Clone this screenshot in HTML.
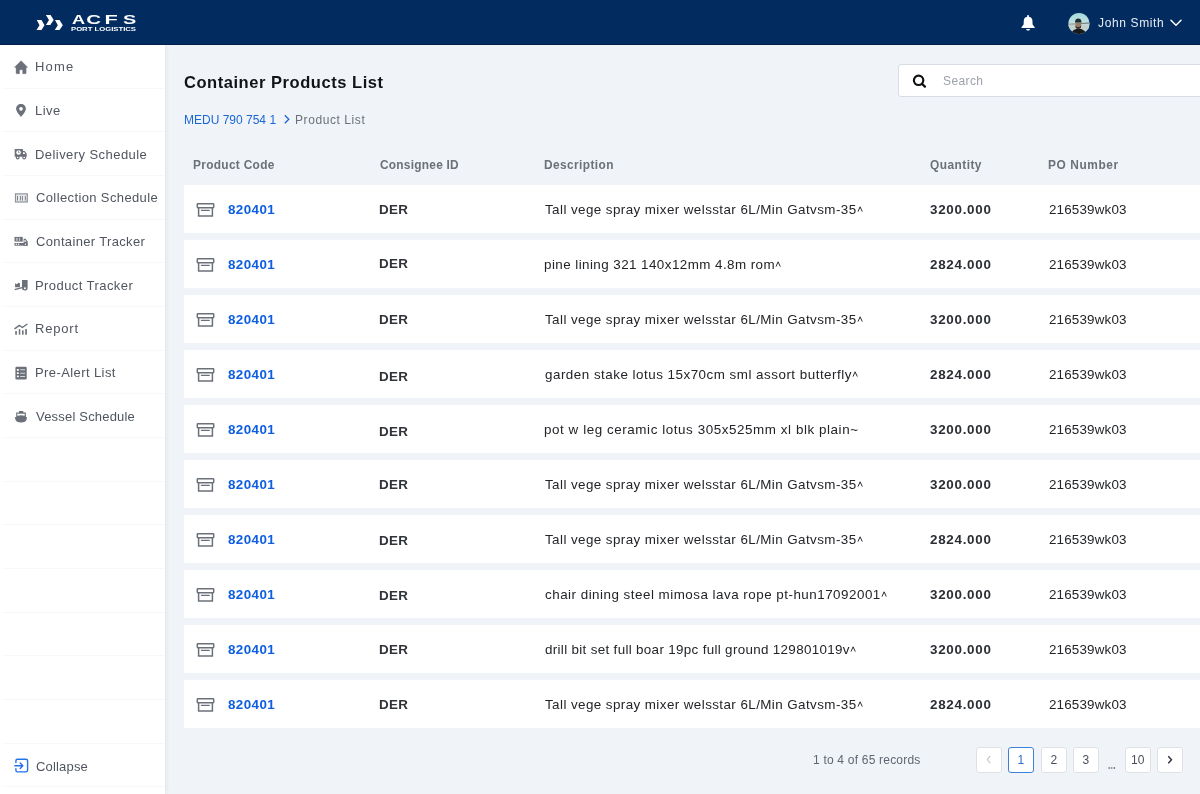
<!DOCTYPE html>
<html><head><meta charset="utf-8">
<style>
*{margin:0;padding:0;box-sizing:border-box}
html,body{width:1200px;height:794px;overflow:hidden;background:#f0f4f8;font-family:"Liberation Sans",sans-serif}
.a{position:absolute}
.t{position:absolute;white-space:nowrap;line-height:1;z-index:3;will-change:transform}
#hdr{left:0;top:0;width:1200px;height:45px;background:#022b60;box-shadow:inset 0 -1px 0 rgba(0,10,40,.35);z-index:2}
#side{left:0;top:45px;width:165px;height:749px;background:#fff;box-shadow:1px 0 5px rgba(0,0,0,.07)}
.sep{position:absolute;left:2px;width:163px;height:1px;background:#f7f8f9}
.nav{color:#50565f}
.ni{position:absolute;left:14px}
.hd{font-weight:bold;color:#6b7079}
.row{position:absolute;left:184px;width:1016px;height:48px;background:#fff}
.code{font-weight:bold;color:#0d5ee2}
.der{font-weight:bold;color:#303338}
.desc{color:#222428}
.qty{font-weight:bold;color:#2b2e33}
.po{color:#222428}
.pb{position:absolute;top:746.5px;width:25.5px;height:25.5px;border:1px solid #dde1e6;border-radius:3px;background:#fff;font-size:12px;color:#4a4f57;text-align:center;line-height:25.5px;will-change:transform}
svg.a,svg.ni{z-index:3}
</style></head><body>
<div id="hdr" class="a"></div>
<svg class="a" style="left:34px;top:12px" width="32" height="22" viewBox="0 0 32 22">
<path d="M2.8 8 L7.5 8 L10.5 13.3 L7.5 18 L2.5 18 L5.5 13.3 Z" fill="#fff"/>
<path d="M11.9 3 L16.6 3 L19.7 8 L16.3 13 L11.9 13 L15 8 Z" fill="#fff"/>
<path d="M21 8 L25.5 8 L28.8 13.3 L25.5 18 L20.8 18 L23.8 13.3 Z" fill="#fff"/>
</svg>
<svg class="a" style="left:70px;top:13px;will-change:transform" width="70" height="20" viewBox="0 0 70 20"><g font-family="Liberation Sans" font-weight="bold" font-size="12.8" fill="#fff"><text transform="translate(2,11) scale(1.42,1)">A</text><text transform="translate(16.2,11) scale(1.6,1)">C</text><text transform="translate(34.6,11) scale(1.7,1)">F</text><text transform="translate(53,11) scale(1.55,1)">S</text></g><text x="1" y="18" font-family="Liberation Sans" font-weight="bold" font-size="5.4" fill="#fff" textLength="65" lengthAdjust="spacingAndGlyphs">PORT LOGISTICS</text></svg>
<svg class="a" style="left:1016px;top:10px" width="24" height="24" viewBox="0 0 24 24">
<rect x="11.2" y="5" width="1.8" height="2.6" rx="0.8" fill="#fff"/>
<path d="M12.1 6.7 C14.9 6.7 16.3 8.3 16.4 10.6 L16.6 14.4 L18.7 17.2 L18.7 17.9 L5.5 17.9 L5.5 17.2 L7.6 14.4 L7.8 10.6 C7.9 8.3 9.3 6.7 12.1 6.7 Z" fill="#fff"/>
<path d="M10.2 18.9 L14 18.9 C13.9 20 13.1 20.6 12.1 20.6 C11.1 20.6 10.3 20 10.2 18.9 Z" fill="#fff"/>
</svg>
<svg class="a" style="left:1068px;top:12.5px" width="22" height="22" viewBox="0 0 22 22">
<defs><clipPath id="cc"><circle cx="11" cy="10.6" r="10.6"/></clipPath>
<linearGradient id="sky" x1="0" y1="0" x2="0" y2="1"><stop offset="0" stop-color="#a4dadd"/><stop offset="0.45" stop-color="#c4dede"/><stop offset="1" stop-color="#c9d3cf"/></linearGradient></defs>
<g clip-path="url(#cc)">
<rect width="22" height="22" fill="url(#sky)"/>
<path d="M0 10.8 L8 10.6 L22 9.2 L22 10.6 L8 11.6 L0 11.8 Z" fill="#6d7f80"/>
<rect x="0" y="11.6" width="22" height="5" fill="#c3d0cd"/>
<path d="M7.3 9.5 C7.3 13.8 8.5 15.6 10.3 15.6 C12.1 15.6 13.3 13.8 13.3 9.5 Z" fill="#9a7b68"/>
<path d="M7.4 12.2 C8 14.6 12.6 14.6 13.2 12.2 L13.1 14.2 C12.3 16.2 8.3 16.2 7.5 14.2 Z" fill="#3e3029"/>
<path d="M7.1 8.6 C7.2 6.6 8.5 5.5 10.3 5.5 C12.1 5.5 13.3 6.6 13.4 8.6 L13.6 9.6 L7 9.6 Z" fill="#17302f"/>
<path d="M2.5 22 C3.5 18 6.5 15.8 10.3 15.8 C14.1 15.8 17.5 17.5 19 22 Z" fill="#151b1b"/>
</g></svg>
<div class="t " id="t0" style="left:1098.00px;top:17.21px;font-size:12px;letter-spacing:0.633px;color:#e8ecf3">John Smith</div>
<svg class="a" style="left:1170px;top:18.5px" width="12" height="8" viewBox="0 0 12 8">
<path d="M1 1.2 L6 6.2 L11 1.2" stroke="#fff" stroke-width="1.5" fill="none" stroke-linecap="round" stroke-linejoin="round"/></svg>
<div id="side" class="a"></div>
<div class="sep" style="top:87.7px"></div>
<div class="sep" style="top:131.3px"></div>
<div class="sep" style="top:175.0px"></div>
<div class="sep" style="top:218.6px"></div>
<div class="sep" style="top:262.3px"></div>
<div class="sep" style="top:306.0px"></div>
<div class="sep" style="top:349.6px"></div>
<div class="sep" style="top:393.3px"></div>
<div class="sep" style="top:436.9px"></div>
<div class="sep" style="top:480.6px"></div>
<div class="sep" style="top:524.3px"></div>
<div class="sep" style="top:567.9px"></div>
<div class="sep" style="top:611.6px"></div>
<div class="sep" style="top:655.2px"></div>
<div class="sep" style="top:698.9px"></div>
<div class="sep" style="top:742.6px"></div>
<div class="sep" style="top:786.2px"></div>
<div class="t nav" id="t1" style="left:35.39px;top:60.30px;font-size:13px;letter-spacing:1.167px;">Home</div>
<div class="t nav" id="t2" style="left:35.39px;top:103.96px;font-size:13px;letter-spacing:0.433px;">Live</div>
<div class="t nav" id="t3" style="left:35.39px;top:147.63px;font-size:13px;letter-spacing:0.438px;">Delivery Schedule</div>
<div class="t nav" id="t4" style="left:36.39px;top:191.29px;font-size:13px;letter-spacing:0.378px;">Collection Schedule</div>
<div class="t nav" id="t5" style="left:36.39px;top:234.94px;font-size:13px;letter-spacing:0.344px;">Container Tracker</div>
<div class="t nav" id="t6" style="left:35.39px;top:278.60px;font-size:13px;letter-spacing:0.429px;">Product Tracker</div>
<div class="t nav" id="t7" style="left:35.39px;top:322.27px;font-size:13px;letter-spacing:0.800px;">Report</div>
<div class="t nav" id="t8" style="left:35.39px;top:365.93px;font-size:13px;letter-spacing:0.408px;">Pre-Alert List</div>
<div class="t nav" id="t9" style="left:36.39px;top:409.58px;font-size:13px;letter-spacing:0.193px;">Vessel Schedule</div>
<div class="t nav" id="t10" style="left:35.60px;top:759.50px;font-size:13px;letter-spacing:0.171px;">Collapse</div>
<svg class="ni" style="left:12px;top:58px" width="18" height="18" viewBox="0 0 18 18"><path d="M9.1 2.7 L15.6 9.3 L14.1 9.6 L14.1 15.1 Q14.1 15.7 13.5 15.7 L10.7 15.7 L10.7 11.8 L7.5 11.8 L7.5 15.7 L4.7 15.7 Q4.1 15.7 4.1 15.1 L4.1 9.6 L2.5 9.3 Z" fill="#6b7079" stroke="#6b7079" stroke-width="0.4" stroke-linejoin="round"/></svg>
<svg class="ni" style="left:12px;top:101px" width="18" height="18" viewBox="0 0 18 18"><path d="M9 2.9 C11.8 2.9 13.9 5 13.9 7.8 C13.9 10.8 9 15.9 9 15.9 C9 15.9 4.1 10.8 4.1 7.8 C4.1 5 6.2 2.9 9 2.9 Z M9 6 A1.85 1.85 0 1 0 9 9.7 A1.85 1.85 0 1 0 9 6 Z" fill="#6b7079" fill-rule="evenodd"/></svg>
<svg class="ni" style="left:12px;top:145px" width="18" height="18" viewBox="0 0 18 18"><path d="M2.7 4 L10.9 4 L10.9 6.1 L12.6 6.1 L14.7 8.4 L14.7 11.8 L2.7 11.8 Z" fill="#6b7079"/><circle cx="5.7" cy="12.5" r="1.9" fill="#6b7079"/><circle cx="12.2" cy="12.5" r="1.9" fill="#6b7079"/><circle cx="5.7" cy="12.5" r="0.8" fill="#fff"/><circle cx="12.2" cy="12.5" r="0.8" fill="#fff"/><circle cx="6.6" cy="7.5" r="2.3" fill="#fff"/><path d="M6.5 5.9 L6.5 7.5 L7.7 7.7" stroke="#6b7079" stroke-width="0.7" fill="none"/><path d="M11 7.2 L12.3 7.2 L13.4 9.1 L11 9.1 Z" fill="#fff"/></svg>
<svg class="ni" style="left:12px;top:189px" width="18" height="18" viewBox="0 0 18 18"><rect x="3.5" y="4.9" width="11.8" height="8.1" fill="#eceef0" stroke="#8d9198" stroke-width="1.2"/><path d="M5.5 6.9 V11.6 M8.4 6.9 V11.6 M10.4 6.9 V11.6 M13.3 6.9 V11.6" stroke="#7a7f87" stroke-width="1"/></svg>
<svg class="ni" style="left:12px;top:233px" width="18" height="18" viewBox="0 0 18 18"><rect x="2.5" y="3.9" width="8.2" height="4.7" fill="#6b7079"/><rect x="3.9" y="4.8" width="1.9" height="3" fill="#b4b8be"/><rect x="6.9" y="4.8" width="1.2" height="3" fill="#c4c7cc"/><path d="M11.6 5.7 L13.5 5.7 L15.6 8.4 L15.6 12.7 L11.6 12.7 Z" fill="#6b7079"/><rect x="2.5" y="10" width="13.1" height="2.7" fill="#6b7079"/><rect x="12.2" y="7.4" width="1.8" height="1.3" fill="#fff"/><circle cx="4.3" cy="11.3" r="0.7" fill="#fff"/><circle cx="6.6" cy="11.3" r="0.7" fill="#fff"/><circle cx="13.4" cy="11.3" r="0.7" fill="#fff"/></svg>
<svg class="ni" style="left:12px;top:276px" width="18" height="18" viewBox="0 0 18 18"><path d="M10 4 L15.6 4 L15.6 12 Q15.6 14.5 13 14.5 Q10 14.5 10 12 Z" fill="#6b7079"/><circle cx="12.9" cy="12.2" r="1" fill="#fff"/><path d="M3.1 7.2 L4.8 8.3 L6.4 6.8 L7.9 7.3 L7.9 11.3 L3.1 11.3 Z" fill="#6b7079"/><path d="M2.7 13.6 L10 11.6" stroke="#6b7079" stroke-width="1.3"/></svg>
<svg class="ni" style="left:12px;top:320px" width="18" height="18" viewBox="0 0 18 18"><path d="M2.9 8.6 L7.3 5.4 L10.4 7.5 L15 4.2" stroke="#6b7079" stroke-width="1.35" fill="none" stroke-linecap="round" stroke-linejoin="round"/><rect x="3.2" y="11.1" width="1.7" height="3.6" fill="#6b7079"/><rect x="6.8" y="9.1" width="1.5" height="5.6" fill="#6b7079"/><rect x="10" y="10.4" width="1.6" height="4.3" fill="#6b7079"/><rect x="13.2" y="9.1" width="1.7" height="5.6" fill="#6b7079"/></svg>
<svg class="ni" style="left:12px;top:364px" width="18" height="18" viewBox="0 0 18 18"><rect x="3.4" y="2.7" width="11.3" height="12.9" rx="1.3" fill="#6b7079"/><rect x="4.9" y="5" width="1.9" height="1.8" fill="#fff"/><rect x="4.9" y="8.3" width="1.9" height="1.7" fill="#fff"/><rect x="4.9" y="11.6" width="1.9" height="1.6" fill="#fff"/><path d="M8.2 5.8 H13 M8.2 9.2 H13 M8.2 12.5 H13" stroke="#d4d7db" stroke-width="1.1"/></svg>
<svg class="ni" style="left:12px;top:407px" width="18" height="18" viewBox="0 0 18 18"><rect x="7" y="4" width="4.3" height="2" fill="#6b7079"/><path d="M4.2 5.4 H13.9 V10.2 H4.2 Z M5.2 6.8 V8.8 Q9 7.6 12.7 8.8 V6.8 Z" fill="#6b7079" fill-rule="evenodd"/><path d="M2.9 10 H15 L14.6 12.5 Q13.8 15.4 9 15.4 Q4.2 15.4 3.4 12.5 Z" fill="#6b7079"/></svg>
<svg class="ni" style="left:12px;top:756px" width="18" height="18" viewBox="0 0 18 18"><path d="M3.9 6.6 V4.8 Q3.9 3.2 5.5 3.2 H13.9 Q15.6 3.2 15.6 4.8 V14.3 Q15.6 15.9 13.9 15.9 H5.5 Q3.9 15.9 3.9 14.3 V12.7" stroke="#2272e8" stroke-width="1.4" fill="none" stroke-linecap="round"/><path d="M2.8 9.75 H10.4 M8.2 7.1 L10.8 9.75 L8.2 12.4" stroke="#2272e8" stroke-width="1.4" fill="none" stroke-linecap="round" stroke-linejoin="round"/></svg>
<div class="t " id="t11" style="left:184.00px;top:74.02px;font-size:16.5px;letter-spacing:0.545px;font-weight:bold;color:#111317">Container Products List</div>
<div class="t " id="t12" style="left:184.00px;top:114.41px;font-size:12px;letter-spacing:0.000px;color:#1a66d6">MEDU 790 754 1</div>
<svg class="a" style="left:283px;top:114px" width="8" height="11" viewBox="0 0 8 11"><path d="M1.8 1.2 L5.8 5.2 L1.8 9.2" stroke="#1a66d6" stroke-width="1.3" fill="none"/></svg>
<div class="t " id="t13" style="left:295.19px;top:114.41px;font-size:12px;letter-spacing:0.582px;color:#6b7079">Product List</div>
<div class="a" style="left:898px;top:64px;width:320px;height:33px;background:#fff;border:1px solid #d8dde3;border-radius:3px"></div>
<svg class="a" style="left:912px;top:73.5px" width="16" height="16" viewBox="0 0 16 16"><circle cx="6.6" cy="6.3" r="4.7" stroke="#111" stroke-width="2.2" fill="none"/><path d="M10 9.7 L12.9 12.6" stroke="#111" stroke-width="2.3" stroke-linecap="round"/></svg>
<div class="t " id="t14" style="left:943.00px;top:75.01px;font-size:12px;letter-spacing:0.400px;color:#9ca1a9">Search</div>
<div class="t hd" id="t15" style="left:193.19px;top:160.40px;font-size:11.9px;letter-spacing:0.309px;">Product Code</div>
<div class="t hd" id="t16" style="left:380.00px;top:160.40px;font-size:11.9px;letter-spacing:0.245px;">Consignee ID</div>
<div class="t hd" id="t17" style="left:544.19px;top:160.40px;font-size:11.9px;letter-spacing:0.400px;">Description</div>
<div class="t hd" id="t18" style="left:930.00px;top:160.40px;font-size:11.9px;letter-spacing:0.464px;">Quantity</div>
<div class="t hd" id="t19" style="left:1047.50px;top:160.40px;font-size:11.9px;letter-spacing:0.594px;">PO Number</div>
<div class="row" style="top:185px"></div>
<svg class="a" style="left:196px;top:202.5px" width="19" height="15" viewBox="0 0 19 15"><rect x="1.3" y="0.8" width="16.4" height="3.9" rx="0.6" fill="none" stroke="#6b7079" stroke-width="1.5"/><path d="M2.6 4.7 V13 H16.4 V4.7" fill="none" stroke="#6b7079" stroke-width="1.5"/><path d="M5.5 7.4 H13.2" stroke="#6b7079" stroke-width="1.4" stroke-linecap="round"/></svg>
<div class="t code" id="t20" style="left:227.79px;top:203.41px;font-size:13.4px;letter-spacing:0.400px;">820401</div>
<div class="t der" id="t21" style="left:379.39px;top:203.41px;font-size:13.4px;letter-spacing:0.300px;">DER</div>
<div class="t desc" id="t22" style="left:545.19px;top:203.41px;font-size:13.4px;letter-spacing:0.422px;">Tall vege spray mixer welsstar 6L/Min Gatvsm-35<svg width="6.5" height="6" viewBox="0 0 6.5 6" style="vertical-align:2px;margin-left:0.3px"><path d="M1 5.6 L3.1 0.8 L5.3 5.6" stroke="currentColor" stroke-width="0.95" fill="none"/></svg></div>
<div class="t qty" id="t23" style="left:930.00px;top:203.41px;font-size:13.4px;letter-spacing:0.714px;">3200.000</div>
<div class="t po" id="t24" style="left:1049.00px;top:203.41px;font-size:13.4px;letter-spacing:0.167px;">216539wk03</div>
<div class="row" style="top:240px"></div>
<svg class="a" style="left:196px;top:257.5px" width="19" height="15" viewBox="0 0 19 15"><rect x="1.3" y="0.8" width="16.4" height="3.9" rx="0.6" fill="none" stroke="#6b7079" stroke-width="1.5"/><path d="M2.6 4.7 V13 H16.4 V4.7" fill="none" stroke="#6b7079" stroke-width="1.5"/><path d="M5.5 7.4 H13.2" stroke="#6b7079" stroke-width="1.4" stroke-linecap="round"/></svg>
<div class="t code" id="t25" style="left:227.79px;top:258.41px;font-size:13.4px;letter-spacing:0.400px;">820401</div>
<div class="t der" id="t26" style="left:379.39px;top:256.91px;font-size:13.4px;letter-spacing:0.300px;">DER</div>
<div class="t desc" id="t27" style="left:544.19px;top:258.41px;font-size:13.4px;letter-spacing:0.438px;">pine lining 321 140x12mm 4.8m rom<svg width="6.5" height="6" viewBox="0 0 6.5 6" style="vertical-align:2px;margin-left:0.3px"><path d="M1 5.6 L3.1 0.8 L5.3 5.6" stroke="currentColor" stroke-width="0.95" fill="none"/></svg></div>
<div class="t qty" id="t28" style="left:930.00px;top:258.41px;font-size:13.4px;letter-spacing:0.714px;">2824.000</div>
<div class="t po" id="t29" style="left:1049.00px;top:258.41px;font-size:13.4px;letter-spacing:0.167px;">216539wk03</div>
<div class="row" style="top:295px"></div>
<svg class="a" style="left:196px;top:312.5px" width="19" height="15" viewBox="0 0 19 15"><rect x="1.3" y="0.8" width="16.4" height="3.9" rx="0.6" fill="none" stroke="#6b7079" stroke-width="1.5"/><path d="M2.6 4.7 V13 H16.4 V4.7" fill="none" stroke="#6b7079" stroke-width="1.5"/><path d="M5.5 7.4 H13.2" stroke="#6b7079" stroke-width="1.4" stroke-linecap="round"/></svg>
<div class="t code" id="t30" style="left:227.79px;top:313.41px;font-size:13.4px;letter-spacing:0.400px;">820401</div>
<div class="t der" id="t31" style="left:379.39px;top:313.41px;font-size:13.4px;letter-spacing:0.300px;">DER</div>
<div class="t desc" id="t32" style="left:545.19px;top:313.41px;font-size:13.4px;letter-spacing:0.422px;">Tall vege spray mixer welsstar 6L/Min Gatvsm-35<svg width="6.5" height="6" viewBox="0 0 6.5 6" style="vertical-align:2px;margin-left:0.3px"><path d="M1 5.6 L3.1 0.8 L5.3 5.6" stroke="currentColor" stroke-width="0.95" fill="none"/></svg></div>
<div class="t qty" id="t33" style="left:930.00px;top:313.41px;font-size:13.4px;letter-spacing:0.714px;">3200.000</div>
<div class="t po" id="t34" style="left:1049.00px;top:313.41px;font-size:13.4px;letter-spacing:0.167px;">216539wk03</div>
<div class="row" style="top:350px"></div>
<svg class="a" style="left:196px;top:367.5px" width="19" height="15" viewBox="0 0 19 15"><rect x="1.3" y="0.8" width="16.4" height="3.9" rx="0.6" fill="none" stroke="#6b7079" stroke-width="1.5"/><path d="M2.6 4.7 V13 H16.4 V4.7" fill="none" stroke="#6b7079" stroke-width="1.5"/><path d="M5.5 7.4 H13.2" stroke="#6b7079" stroke-width="1.4" stroke-linecap="round"/></svg>
<div class="t code" id="t35" style="left:227.79px;top:368.41px;font-size:13.4px;letter-spacing:0.400px;">820401</div>
<div class="t der" id="t36" style="left:379.39px;top:370.30px;font-size:13.4px;letter-spacing:0.300px;">DER</div>
<div class="t desc" id="t37" style="left:545.19px;top:368.41px;font-size:13.4px;letter-spacing:0.496px;">garden stake lotus 15x70cm sml assort butterfly<svg width="6.5" height="6" viewBox="0 0 6.5 6" style="vertical-align:2px;margin-left:0.3px"><path d="M1 5.6 L3.1 0.8 L5.3 5.6" stroke="currentColor" stroke-width="0.95" fill="none"/></svg></div>
<div class="t qty" id="t38" style="left:930.00px;top:368.41px;font-size:13.4px;letter-spacing:0.714px;">2824.000</div>
<div class="t po" id="t39" style="left:1049.00px;top:368.41px;font-size:13.4px;letter-spacing:0.167px;">216539wk03</div>
<div class="row" style="top:405px"></div>
<svg class="a" style="left:196px;top:422.5px" width="19" height="15" viewBox="0 0 19 15"><rect x="1.3" y="0.8" width="16.4" height="3.9" rx="0.6" fill="none" stroke="#6b7079" stroke-width="1.5"/><path d="M2.6 4.7 V13 H16.4 V4.7" fill="none" stroke="#6b7079" stroke-width="1.5"/><path d="M5.5 7.4 H13.2" stroke="#6b7079" stroke-width="1.4" stroke-linecap="round"/></svg>
<div class="t code" id="t40" style="left:227.79px;top:423.41px;font-size:13.4px;letter-spacing:0.400px;">820401</div>
<div class="t der" id="t41" style="left:379.39px;top:424.50px;font-size:13.4px;letter-spacing:0.300px;">DER</div>
<div class="t desc" id="t42" style="left:544.19px;top:423.41px;font-size:13.4px;letter-spacing:0.572px;">pot w leg ceramic lotus 305x525mm xl blk plain~</div>
<div class="t qty" id="t43" style="left:930.00px;top:423.41px;font-size:13.4px;letter-spacing:0.714px;">3200.000</div>
<div class="t po" id="t44" style="left:1049.00px;top:423.41px;font-size:13.4px;letter-spacing:0.167px;">216539wk03</div>
<div class="row" style="top:460px"></div>
<svg class="a" style="left:196px;top:477.5px" width="19" height="15" viewBox="0 0 19 15"><rect x="1.3" y="0.8" width="16.4" height="3.9" rx="0.6" fill="none" stroke="#6b7079" stroke-width="1.5"/><path d="M2.6 4.7 V13 H16.4 V4.7" fill="none" stroke="#6b7079" stroke-width="1.5"/><path d="M5.5 7.4 H13.2" stroke="#6b7079" stroke-width="1.4" stroke-linecap="round"/></svg>
<div class="t code" id="t45" style="left:227.79px;top:478.41px;font-size:13.4px;letter-spacing:0.400px;">820401</div>
<div class="t der" id="t46" style="left:379.39px;top:478.41px;font-size:13.4px;letter-spacing:0.300px;">DER</div>
<div class="t desc" id="t47" style="left:545.19px;top:478.41px;font-size:13.4px;letter-spacing:0.422px;">Tall vege spray mixer welsstar 6L/Min Gatvsm-35<svg width="6.5" height="6" viewBox="0 0 6.5 6" style="vertical-align:2px;margin-left:0.3px"><path d="M1 5.6 L3.1 0.8 L5.3 5.6" stroke="currentColor" stroke-width="0.95" fill="none"/></svg></div>
<div class="t qty" id="t48" style="left:930.00px;top:478.41px;font-size:13.4px;letter-spacing:0.714px;">3200.000</div>
<div class="t po" id="t49" style="left:1049.00px;top:478.41px;font-size:13.4px;letter-spacing:0.167px;">216539wk03</div>
<div class="row" style="top:515px"></div>
<svg class="a" style="left:196px;top:532.5px" width="19" height="15" viewBox="0 0 19 15"><rect x="1.3" y="0.8" width="16.4" height="3.9" rx="0.6" fill="none" stroke="#6b7079" stroke-width="1.5"/><path d="M2.6 4.7 V13 H16.4 V4.7" fill="none" stroke="#6b7079" stroke-width="1.5"/><path d="M5.5 7.4 H13.2" stroke="#6b7079" stroke-width="1.4" stroke-linecap="round"/></svg>
<div class="t code" id="t50" style="left:227.79px;top:533.41px;font-size:13.4px;letter-spacing:0.400px;">820401</div>
<div class="t der" id="t51" style="left:379.39px;top:533.91px;font-size:13.4px;letter-spacing:0.300px;">DER</div>
<div class="t desc" id="t52" style="left:545.19px;top:533.41px;font-size:13.4px;letter-spacing:0.422px;">Tall vege spray mixer welsstar 6L/Min Gatvsm-35<svg width="6.5" height="6" viewBox="0 0 6.5 6" style="vertical-align:2px;margin-left:0.3px"><path d="M1 5.6 L3.1 0.8 L5.3 5.6" stroke="currentColor" stroke-width="0.95" fill="none"/></svg></div>
<div class="t qty" id="t53" style="left:930.00px;top:533.41px;font-size:13.4px;letter-spacing:0.714px;">2824.000</div>
<div class="t po" id="t54" style="left:1049.00px;top:533.41px;font-size:13.4px;letter-spacing:0.167px;">216539wk03</div>
<div class="row" style="top:570px"></div>
<svg class="a" style="left:196px;top:587.5px" width="19" height="15" viewBox="0 0 19 15"><rect x="1.3" y="0.8" width="16.4" height="3.9" rx="0.6" fill="none" stroke="#6b7079" stroke-width="1.5"/><path d="M2.6 4.7 V13 H16.4 V4.7" fill="none" stroke="#6b7079" stroke-width="1.5"/><path d="M5.5 7.4 H13.2" stroke="#6b7079" stroke-width="1.4" stroke-linecap="round"/></svg>
<div class="t code" id="t55" style="left:227.79px;top:588.41px;font-size:13.4px;letter-spacing:0.400px;">820401</div>
<div class="t der" id="t56" style="left:379.39px;top:589.30px;font-size:13.4px;letter-spacing:0.300px;">DER</div>
<div class="t desc" id="t57" style="left:545.19px;top:588.41px;font-size:13.4px;letter-spacing:0.492px;">chair dining steel mimosa lava rope pt-hun17092001<svg width="6.5" height="6" viewBox="0 0 6.5 6" style="vertical-align:2px;margin-left:0.3px"><path d="M1 5.6 L3.1 0.8 L5.3 5.6" stroke="currentColor" stroke-width="0.95" fill="none"/></svg></div>
<div class="t qty" id="t58" style="left:930.00px;top:588.41px;font-size:13.4px;letter-spacing:0.714px;">3200.000</div>
<div class="t po" id="t59" style="left:1049.00px;top:588.41px;font-size:13.4px;letter-spacing:0.167px;">216539wk03</div>
<div class="row" style="top:625px"></div>
<svg class="a" style="left:196px;top:642.5px" width="19" height="15" viewBox="0 0 19 15"><rect x="1.3" y="0.8" width="16.4" height="3.9" rx="0.6" fill="none" stroke="#6b7079" stroke-width="1.5"/><path d="M2.6 4.7 V13 H16.4 V4.7" fill="none" stroke="#6b7079" stroke-width="1.5"/><path d="M5.5 7.4 H13.2" stroke="#6b7079" stroke-width="1.4" stroke-linecap="round"/></svg>
<div class="t code" id="t60" style="left:227.79px;top:643.41px;font-size:13.4px;letter-spacing:0.400px;">820401</div>
<div class="t der" id="t61" style="left:379.39px;top:643.41px;font-size:13.4px;letter-spacing:0.300px;">DER</div>
<div class="t desc" id="t62" style="left:545.19px;top:643.41px;font-size:13.4px;letter-spacing:0.328px;">drill bit set full boar 19pc full ground 129801019v<svg width="6.5" height="6" viewBox="0 0 6.5 6" style="vertical-align:2px;margin-left:0.3px"><path d="M1 5.6 L3.1 0.8 L5.3 5.6" stroke="currentColor" stroke-width="0.95" fill="none"/></svg></div>
<div class="t qty" id="t63" style="left:930.00px;top:643.41px;font-size:13.4px;letter-spacing:0.714px;">3200.000</div>
<div class="t po" id="t64" style="left:1049.00px;top:643.41px;font-size:13.4px;letter-spacing:0.167px;">216539wk03</div>
<div class="row" style="top:680px"></div>
<svg class="a" style="left:196px;top:697.5px" width="19" height="15" viewBox="0 0 19 15"><rect x="1.3" y="0.8" width="16.4" height="3.9" rx="0.6" fill="none" stroke="#6b7079" stroke-width="1.5"/><path d="M2.6 4.7 V13 H16.4 V4.7" fill="none" stroke="#6b7079" stroke-width="1.5"/><path d="M5.5 7.4 H13.2" stroke="#6b7079" stroke-width="1.4" stroke-linecap="round"/></svg>
<div class="t code" id="t65" style="left:227.79px;top:698.41px;font-size:13.4px;letter-spacing:0.400px;">820401</div>
<div class="t der" id="t66" style="left:379.39px;top:698.30px;font-size:13.4px;letter-spacing:0.300px;">DER</div>
<div class="t desc" id="t67" style="left:545.19px;top:698.41px;font-size:13.4px;letter-spacing:0.422px;">Tall vege spray mixer welsstar 6L/Min Gatvsm-35<svg width="6.5" height="6" viewBox="0 0 6.5 6" style="vertical-align:2px;margin-left:0.3px"><path d="M1 5.6 L3.1 0.8 L5.3 5.6" stroke="currentColor" stroke-width="0.95" fill="none"/></svg></div>
<div class="t qty" id="t68" style="left:930.00px;top:698.41px;font-size:13.4px;letter-spacing:0.714px;">2824.000</div>
<div class="t po" id="t69" style="left:1049.00px;top:698.41px;font-size:13.4px;letter-spacing:0.167px;">216539wk03</div>
<div class="t " id="t70" style="left:813.00px;top:754.32px;font-size:12px;letter-spacing:0.205px;color:#5f6670">1 to 4 of 65 records</div>
<div class="pb" style="left:975.5px;"><svg width="8" height="11" viewBox="0 0 8 11" style="vertical-align:-1px"><path d="M5.3 1.8 L2.3 5.6 L5.3 9.4" stroke="#c3c7cd" stroke-width="1.1" fill="none"/></svg></div>
<div class="pb" style="left:1008px;border-color:#3d7fd9;color:#2f6fd0;">1</div>
<div class="pb" style="left:1040.5px;">2</div>
<div class="pb" style="left:1072.5px;">3</div>
<div class="pb" style="left:1124.5px;">10</div>
<div class="pb" style="left:1157px;"><svg width="8" height="11" viewBox="0 0 8 11" style="vertical-align:-1px"><path d="M2.3 2.3 L5.5 5.8 L2.3 9.3" stroke="#2b2e33" stroke-width="1.4" fill="none"/></svg></div>
<div class="a" style="left:1107.5px;top:767px;width:8px;height:2px;background:radial-gradient(circle at 1px 1px,#7d828a 0.65px,transparent 0.85px) 0 0/2.6px 2px repeat-x"></div>
</body></html>
